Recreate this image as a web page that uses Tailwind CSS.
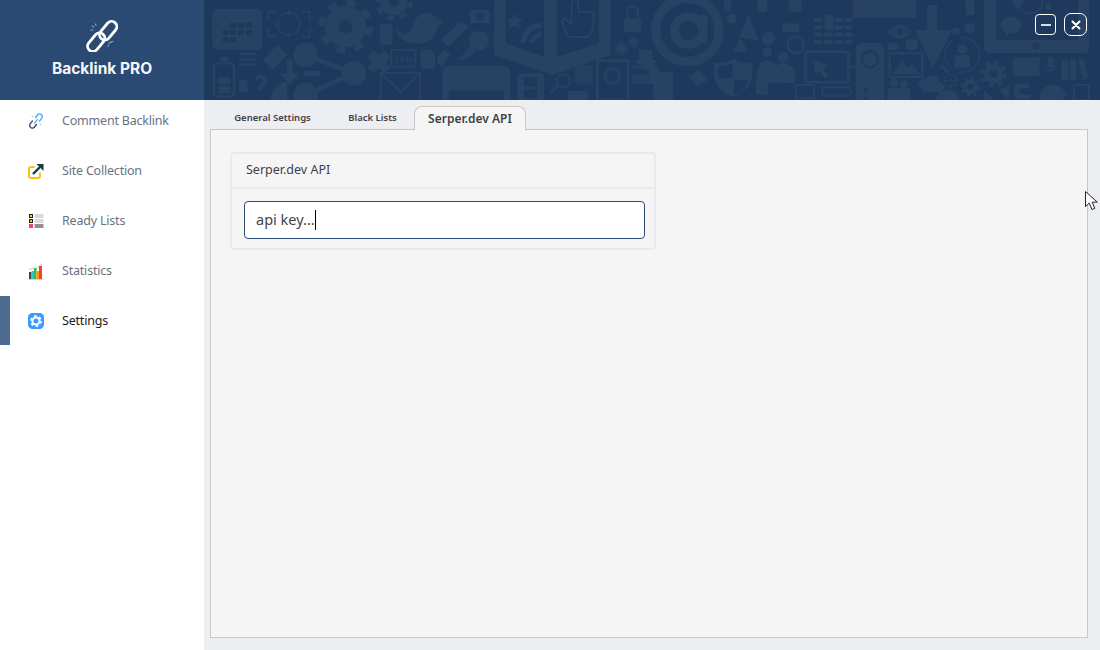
<!DOCTYPE html>
<html lang="en">
<head>
  <meta charset="UTF-8">
  <title>Backlink PRO</title>
  <script src="https://cdn.jsdelivr.net/npm/@tailwindcss/browser@4"></script>
</head>
<body class="w-[1100px] h-[650px] overflow-hidden bg-[#eceef2] font-['Noto_Sans','Open_Sans',sans-serif] relative">
  <!-- Top banner -->
  <header class="flex h-[100px] bg-[#1f395c] relative z-10">
    <div class="w-[204px] shrink-0 bg-[#2a4a73] flex flex-col items-center pt-[20px]">
      <svg width="32" height="32" viewBox="86 20 32 32" fill="none" stroke="white" stroke-linecap="round">
        <rect x="103" y="20" width="10.500" height="21" rx="5.250" transform="rotate(40 108 30.500)" stroke-width="2.800"/>
        <rect x="91" y="31.500" width="10.500" height="21" rx="5.250" transform="rotate(40 96 42)" stroke-width="2.800"/>
        <g stroke-width="0.800" opacity="0.7">
          <path d="M92 26l2 1M96 25.500l-.5-1.500M91 30h2"/>
          <path d="M109 43l2-.5M113 41.500l-2 .5M108 46.500l.5-1.500"/>
        </g>
      </svg>
      <div class="mt-[7px] text-[15.5px] leading-[20px] font-bold text-[#f4f6f9] font-['Inter',sans-serif]">Backlink PRO</div>
    </div>
    <div class="flex-1 relative overflow-hidden">
      <svg class="absolute inset-0" width="896" height="100" viewBox="0 0 896 100" fill="#274262">
        <!-- left half of the pattern -->
        <g transform="scale(0.3333)">
          <rect x="25" y="27" width="150" height="122" rx="15"/>
          <g fill="#1f395c">
            <rect x="78" y="68" width="18" height="15"/><rect x="102" y="68" width="18" height="15"/><rect x="126" y="68" width="18" height="15"/>
            <rect x="56" y="90" width="18" height="15"/><rect x="78" y="90" width="18" height="15"/><rect x="102" y="90" width="18" height="15"/><rect x="126" y="90" width="18" height="15"/>
            <rect x="56" y="112" width="18" height="15"/><rect x="78" y="112" width="18" height="15"/>
          </g>
          <circle cx="255" cy="72" r="34" fill="none" stroke="#274262" stroke-width="5"/>
          <path d="M192 60V35h25M292 35h25v25M317 85v25h-25M217 110h-25V85" fill="none" stroke="#274262" stroke-width="5"/>
          <path d="M255 28v20M255 96v20M211 72h20M279 72h20" stroke="#274262" stroke-width="4"/>
          <circle cx="425" cy="80" r="62"/>
          <circle cx="425" cy="80" r="72" fill="none" stroke="#274262" stroke-width="20" stroke-dasharray="28 28.500"/>
          <circle cx="425" cy="80" r="20" fill="#1f395c"/>
          <circle cx="570" cy="5" r="42"/>
          <circle cx="570" cy="5" r="50" fill="none" stroke="#274262" stroke-width="14" stroke-dasharray="20 19"/>
          <circle cx="570" cy="5" r="15" fill="#1f395c"/>
          <path d="M575 85c20 25 45 15 50-5 5-25 25-45 50-40 15 2 25 15 30 20l15 8-18 8c-5 35-30 58-65 55-35-2-60-20-62-46z"/>
          <rect x="528" y="72" width="38" height="62" rx="3"/>
          <path d="M710 120l60-55 25 15-62 60z"/>
          <circle cx="825" cy="122" r="30"/><path d="M810 130l-50 50h18l8-10h12l28-28z"/>
          <rect x="798" y="30" width="60" height="40" rx="4"/>
          <circle cx="828" cy="50" r="11" fill="#1f395c"/>
          <!-- open book -->
          <path d="M870 0h35v130l115 40V0h40v170l125-40V0h35v165l-175 60-175-60z"/>
          <path d="M950 130c0-38 30-62 62-62v16c-24 0-46 20-46 46zM978 130c0-20 16-34 34-34v14c-10 0-20 10-20 20z"/>
          <path d="M932 38l8 18 18 2-14 12 5 18-17-10-17 10 5-18-14-12 18-2z"/>
          <path d="M1105 0h18v35h45v48l-15 28h-60l-20-48 10-8 18 18z" fill="none" stroke="#274262" stroke-width="6"/>
          <rect x="1260" y="55" width="52" height="42" rx="5"/>
          <path d="M1270 55V35a16 16 0 0 1 32 0v20" fill="none" stroke="#274262" stroke-width="7"/>
          <circle cx="1252" cy="146" r="16"/><circle cx="1252" cy="146" r="20" fill="none" stroke="#274262" stroke-width="6" stroke-dasharray="6 6"/>
          <circle cx="1288" cy="126" r="11"/><circle cx="1288" cy="126" r="14" fill="none" stroke="#274262" stroke-width="5" stroke-dasharray="5 4"/>
          <path d="M1305 150h40v30h15l-35 32-35-32h15z"/>
          <rect x="30" y="190" width="60" height="100" rx="10" fill="none" stroke="#274262" stroke-width="7"/>
          <rect x="43" y="232" width="36" height="22"/><rect x="43" y="258" width="36" height="22"/>
          <rect x="48" y="170" width="26" height="14" rx="3"/>
          <path d="M105 162h50M105 178h50M105 194h50" stroke="#274262" stroke-width="7"/>
          <path d="M175 180l45-45 30 30-45 45z"/>
          <path d="M228 220h20v-42h18v42h20l-29 35z"/>
          <rect x="105" y="240" width="26" height="38" rx="5"/>
          <path d="M152 240c0-22 38-22 38 2 0 14-18 14-18 28h-12c0-18 16-18 16-28 0-8-12-8-12 0z"/>
          <circle cx="305" cy="165" r="37"/><circle cx="450" cy="220" r="37"/><circle cx="305" cy="285" r="37"/>
          <path d="M305 165l145 55-145 65" fill="none" stroke="#274262" stroke-width="14"/>
          <rect x="300" y="213" width="48" height="15" rx="3"/>
          <path d="M200 300c0-35 25-55 50-55v55z"/>
          <path d="M490 170l18-20 17 15 17-15 18 20-15 16 15 16-18 18-17-16-17 16-18-18 15-16z"/>
          <rect x="562" y="150" width="72" height="50" fill="none" stroke="#274262" stroke-width="6"/>
          <path d="M578 187v-22M594 187v-18M610 187v-24M622 187v-12" stroke="#274262" stroke-width="6"/>
          <path d="M650 148h30l14 14v44h-44z"/>
          <path d="M700 170l22-22 18 18-18 18-4 18-18-12z"/>
          <path d="M530 218h118v90H530z" fill="none" stroke="#274262" stroke-width="6"/>
          <path d="M530 218l60 58 58-58" fill="none" stroke="#274262" stroke-width="6"/>
          <path d="M735 198h165a20 20 0 0 1 20 20v90H715v-90a20 20 0 0 1 20-20z"/>
          <rect x="735" y="272" width="165" height="40" fill="#1f395c"/>
          <rect x="940" y="220" width="80" height="85"/>
          <rect x="960" y="232" width="40" height="28" fill="#1f395c"/>
          <rect x="960" y="268" width="40" height="28" fill="#1f395c"/>
          <circle cx="1078" cy="242" r="20" fill="none" stroke="#274262" stroke-width="6"/>
          <path d="M1062 258l-22 22" stroke="#274262" stroke-width="8"/>
          <rect x="1112" y="195" width="56" height="56" opacity="0.7"/>
          <rect x="1180" y="182" width="92" height="118" fill="none" stroke="#274262" stroke-width="8"/>
          <circle cx="1225" cy="228" r="22" fill="none" stroke="#274262" stroke-width="7"/>
          <rect x="1285" y="222" width="55" height="30" opacity="0.8"/>
          <path d="M1285 200h60" stroke="#274262" stroke-width="7"/>
          <rect x="1090" y="272" width="62" height="30" rx="4"/>
        </g>
        <!-- right half of the pattern -->
        <g transform="translate(445 0) scale(0.3333)">
          <circle cx="115" cy="90" r="95" fill="none" stroke="#274262" stroke-width="28"/>
          <circle cx="118" cy="92" r="42" fill="none" stroke="#274262" stroke-width="26"/>
          <path d="M165 45v85" stroke="#274262" stroke-width="22"/>
          <rect x="225" y="0" width="22" height="35" rx="8"/><rect x="325" y="0" width="30" height="35" rx="8"/><rect x="418" y="0" width="40" height="35" rx="8"/>
          <circle cx="248" cy="56" r="15"/>
          <path d="M270 112l28-70 32 80z"/>
          <path d="M250 155l25-42 22 42z"/>
          <rect x="400" y="70" width="50" height="26"/>
          <circle cx="358" cy="115" r="20"/>
          <circle cx="440" cy="135" r="24" fill="none" stroke="#274262" stroke-width="7"/>
          <path d="M495 60h115M495 82h115M495 104h115M495 126h115" stroke="#274262" stroke-width="13" stroke-dasharray="26 5"/>
          <path d="M530 45h24v45h-24z"/>
          <path d="M612 0h190v55H612z"/>
          <circle cx="752" cy="95" r="14" fill="none" stroke="#274262" stroke-width="9"/>
          <path d="M720 95q32-36 64 0q-32 36-64 0z" fill="none" stroke="#274262" stroke-width="6"/>
          <path d="M835 15h30v75h45l-58 115-55-115h38z"/>
          <rect x="910" y="85" width="22" height="18" rx="2"/>
          <circle cx="963" cy="84" r="16"/>
          <path d="M950 0h26v46h-26z"/>
          <path d="M1005 0h315v145a15 15 0 0 1-15 15h-285a15 15 0 0 1-15-15z"/>
          <rect x="1042" y="-5" width="245" height="125" fill="#1f395c"/>
          <circle cx="1162" cy="138" r="10" fill="#1f395c"/>
          <path d="M1085 50c20 0 32 12 32 26s-12 24-32 24l-16 10 3-14c-10-5-17-12-17-20 0-14 12-26 30-26z"/>
          <path d="M1085 0h40l-20 30z"/>
          <circle cx="1145" cy="5" r="35" fill="none" stroke="#274262" stroke-width="5"/>
          <circle cx="1198" cy="20" r="10"/>
          <path d="M0 182l30 20v50H0zM12 216h60v84H12z"/>
          <path d="M120 230l30-20 25 30-30 22z"/>
          <!-- checkered shield -->
          <path d="M195 190c40 0 55-10 58-15 8 8 22 15 57 15v30c0 40-30 60-57 72-27-12-58-32-58-72z"/>
          <path d="M208 200c20-1 33-5 42-10v45h-42zM256 240h42c-3 25-22 38-42 46z" fill="#1f395c"/>
          <circle cx="355" cy="157" r="15"/><path d="M325 225c0-30 15-45 30-45s30 15 30 45v25h-60z"/>
          <circle cx="403" cy="172" r="16"/><path d="M367 250v-25c0-20 18-35 36-35s36 15 36 35v25z"/>
          <rect x="440" y="255" width="55" height="40" fill="none" stroke="#274262" stroke-width="6"/>
          <rect x="320" y="236" width="36" height="48"/>
          <rect x="470" y="155" width="128" height="92" rx="5" fill="none" stroke="#274262" stroke-width="9"/>
          <path d="M490 178l50 18-18 10 18 22-12 8-18-22-10 14z"/>
          <path d="M598 200h22" stroke="#274262" stroke-width="8"/>
          <path d="M640 128h46a20 20 0 0 1 20 20v152h-86V148a20 20 0 0 1 20-20z"/>
          <circle cx="663" cy="178" r="24" fill="none" stroke="#1f395c" stroke-width="7"/>
          <circle cx="650" cy="270" r="7" fill="#1f395c"/><circle cx="650" cy="298" r="7" fill="#1f395c"/>
          <path d="M520 262h80l8 14-8 12h-80z" fill="none" stroke="#274262" stroke-width="5"/>
          <rect x="722" y="160" width="98" height="70" fill="none" stroke="#274262" stroke-width="7"/>
          <path d="M730 222l28-38 18 20 12-14 24 32z"/>
          <rect x="770" y="118" width="36" height="32"/>
          <rect x="716" y="128" width="30" height="22"/>
          <circle cx="735" cy="248" r="13"/><path d="M715 300v-30c0-10 40-10 40 0v30z"/>
          <circle cx="765" cy="252" r="13"/><path d="M745 300v-30c0-10 40-10 40 0v30z"/>
          <circle cx="825" cy="252" r="16"/><circle cx="850" cy="245" r="20"/><circle cx="870" cy="262" r="15"/><rect x="820" y="255" width="52" height="22" rx="10"/>
          <circle cx="905" cy="242" r="19" fill="none" stroke="#274262" stroke-width="4"/>
          <path d="M886 242h38M905 223v38" stroke="#274262" stroke-width="3"/>
          <circle cx="940" cy="164" r="52" fill="none" stroke="#274262" stroke-width="4" stroke-dasharray="90 30"/>
          <circle cx="940" cy="148" r="15"/><rect x="917" y="165" width="46" height="38" rx="5"/>
          <path d="M875 195l22 22" stroke="#274262" stroke-width="9"/>
          <circle cx="1034" cy="222" r="30"/>
          <circle cx="1034" cy="222" r="35" fill="none" stroke="#274262" stroke-width="12" stroke-dasharray="14 13.500"/>
          <circle cx="1034" cy="222" r="12" fill="#1f395c"/>
          <circle cx="964" cy="260" r="22"/>
          <circle cx="964" cy="260" r="26" fill="none" stroke="#274262" stroke-width="9" stroke-dasharray="10 10.400"/>
          <circle cx="964" cy="260" r="9" fill="#1f395c"/>
          <rect x="1092" y="172" width="80" height="56"/>
          <rect x="1196" y="170" width="18" height="34" rx="9"/>
          <path d="M1190 195c0 20 30 20 30 0M1205 212v10" fill="none" stroke="#274262" stroke-width="4"/>
          <rect x="1238" y="178" width="20" height="62"/><rect x="1262" y="178" width="20" height="62"/>
          <path d="M1288 178l16-2 14 60-16 4z"/>
          <path d="M1005 270l30 30h-30zM1080 300l-30-30 30-15z"/>
          <path d="M1115 250h25v15h-20c-14 0-14 18 0 18h25v15h-28c-32 0-32-48-2-48z"/>
          <path d="M1170 300c0-25 15-45 40-45s35 15 45 30l-15 15z"/>
          <rect x="1275" y="255" width="45" height="45" fill="none" stroke="#274262" stroke-width="6"/>
          <path d="M860 300c5-22 22-30 36-30s30 8 36 30z"/>
        </g>
      </svg>
      <div class="absolute top-[13px] right-[13px] flex gap-[8px]">
        <button class="w-[21px] h-[21px] mt-[1px] rounded-[4px] border-[1.5px] border-white flex items-center justify-center">
          <span class="block w-[10px] h-[2px] bg-[#d8dce3]"></span>
        </button>
        <button class="w-[23px] h-[23px] rounded-[7px] border-[1.5px] border-white flex items-center justify-center">
          <svg width="10" height="10" viewBox="0 0 10 10" stroke="white" stroke-width="2" stroke-linecap="round"><path d="M1.500 1.500l7 7M8.500 1.500l-7 7"/></svg>
        </button>
      </div>
    </div>
  </header>

  <div class="flex h-[550px]">
    <!-- Sidebar -->
    <nav class="w-[204px] shrink-0 bg-white text-[12.5px] tracking-[-0.2px] text-[#6b7280] -mt-[4px]">
      <a class="flex items-center h-[50px] pl-[28px] gap-[18px]">
        <svg width="16" height="16" viewBox="0 0 16 16" fill="none" stroke-linecap="round">
          <path d="M7.500 4.500l2-2.500c1-1.200 2.700-1.300 3.800-.4 1.100.9 1.300 2.500.4 3.700l-2.200 2.800" stroke="#42a5f5" stroke-width="1.300"/>
          <path d="M8.500 11.500l-2 2.500c-1 1.200-2.700 1.300-3.800.4-1.100-.9-1.300-2.500-.4-3.700l2.200-2.800" stroke="#2a4a73" stroke-width="1.300"/>
          <path d="M9.500 6.500l-3 3.500" stroke="#64b5f6" stroke-width="1.300"/>
          <path d="M4 2.500l1 1.500M12 11l1.500 1" stroke="#90caf9" stroke-width="1"/>
        </svg>
        <span>Comment Backlink</span>
      </a>
      <a class="flex items-center h-[50px] pl-[28px] gap-[18px]">
        <svg width="16" height="16" viewBox="0 0 16 16" fill="none">
          <path d="M6.500 4H3a2 2 0 0 0-2 2v7a2 2 0 0 0 2 2h7a2 2 0 0 0 2-2V9.500" stroke="#ffc107" stroke-width="2"/>
          <path d="M5 11l7-7" stroke="#0f3d4c" stroke-width="2.400"/>
          <path d="M8.500 1H15.500V8z" fill="#0f3d4c"/>
        </svg>
        <span>Site Collection</span>
      </a>
      <a class="flex items-center h-[50px] pl-[28px] gap-[18px]">
        <svg width="16" height="16" viewBox="0 0 16 16">
          <rect x="1.500" y="1.500" width="3" height="3" fill="#cddc39" stroke="#222" stroke-width="1"/>
          <rect x="1.500" y="6.500" width="3" height="3" fill="#ffc107" stroke="#222" stroke-width="1"/>
          <rect x="1.500" y="11.500" width="3" height="3" fill="#ec407a" stroke="#ec407a" stroke-width="1"/>
          <path d="M6.500 2h9M6.500 4h9M6.500 7h9M6.500 9h9" stroke="#b4b4b4" stroke-width="1"/>
          <path d="M6.500 12h9M6.500 14h9" stroke="#222" stroke-width="1"/>
        </svg>
        <span>Ready Lists</span>
      </a>
      <a class="flex items-center h-[50px] pl-[28px] gap-[18px]">
        <svg width="16" height="17" viewBox="0 0 16 17" fill="none">
          <path d="M1 7l4-2 3 1 6-5" stroke="#c4c4c4" stroke-width="1"/>
          <rect x="1" y="9" width="2.500" height="7" fill="#37474f"/>
          <rect x="3.500" y="8" width="2.500" height="8" fill="#26c6da"/>
          <rect x="6" y="5" width="2.500" height="11" fill="#4caf50"/>
          <rect x="8.500" y="8" width="2.500" height="8" fill="#ff9800"/>
          <rect x="11" y="3" width="3" height="13" fill="#f44336"/>
          <path d="M0.500 16.500h15" stroke="#d6d6c8" stroke-width="1"/>
        </svg>
        <span>Statistics</span>
      </a>
      <a class="flex items-center h-[50px] pl-[28px] gap-[18px] relative text-[#1b1b1b]">
        <span class="absolute left-0 top-0 w-[10px] h-[49px] bg-[#4d6a8f]"></span>
        <svg width="16" height="16" viewBox="0 0 16 16">
          <rect width="16" height="16" rx="4.500" fill="#3b9cff"/>
          <circle cx="8" cy="8" r="3.500" fill="none" stroke="white" stroke-width="2"/>
          <circle cx="8" cy="8" r="5" fill="none" stroke="white" stroke-width="1.800" stroke-dasharray="2.600 2.640"/>
        </svg>
        <span>Settings</span>
      </a>
    </nav>

    <!-- Content -->
    <main class="flex-1 pl-[6px] pr-[12px] pb-[12px] pt-[6px] flex flex-col">
      <div class="flex items-end h-[24px] pl-[4px] relative z-10 -mb-[1px]">
        <div class="w-[117px] h-[23px] flex items-center justify-center text-[9.5px] font-semibold text-[#3f3f46]">General Settings</div>
        <div class="w-[83px] h-[23px] flex items-center justify-center text-[9.5px] font-semibold text-[#3f3f46]">Black Lists</div>
        <div class="w-[112px] h-[24px] flex items-center justify-center text-[12px] font-semibold text-[#3f3f46] bg-[#f5f5f5] border border-b-0 border-[#c8c8c8] rounded-t-[8px]">Serper.dev API</div>
      </div>
      <div class="flex-1 bg-[#f5f5f5] border border-[#c8c8c8] pt-[22px] pl-[19px]">
        <section class="w-[426px] h-[98px] border-2 border-[#e9eaef] rounded-[4px]">
          <div class="h-[35px] border-b-2 border-[#e9eaef] flex items-center pl-[14px] text-[12.5px] text-[#3f3f46]">Serper.dev API</div>
          <div class="pt-[12px] pl-[12px]">
            <div class="w-[401px] h-[38px] bg-white border border-[#2a4a73] rounded-[4px] flex items-center pl-[11px] text-[14.5px] text-[#444]">
              <span>api key...</span><span class="w-px h-[20px] bg-black"></span>
            </div>
          </div>
        </section>
      </div>
    </main>
  </div>

  <!-- Mouse pointer -->
  <svg class="absolute left-[1085px] top-[191px]" width="14" height="20" viewBox="0 0 14 20">
    <path d="M0.500 0.500v15l3.800-3.400 2.700 6.400 2.800-1.200-2.700-6.200h5.200z" fill="white" stroke="#222" stroke-width="1"/>
  </svg>
</body>
</html>
